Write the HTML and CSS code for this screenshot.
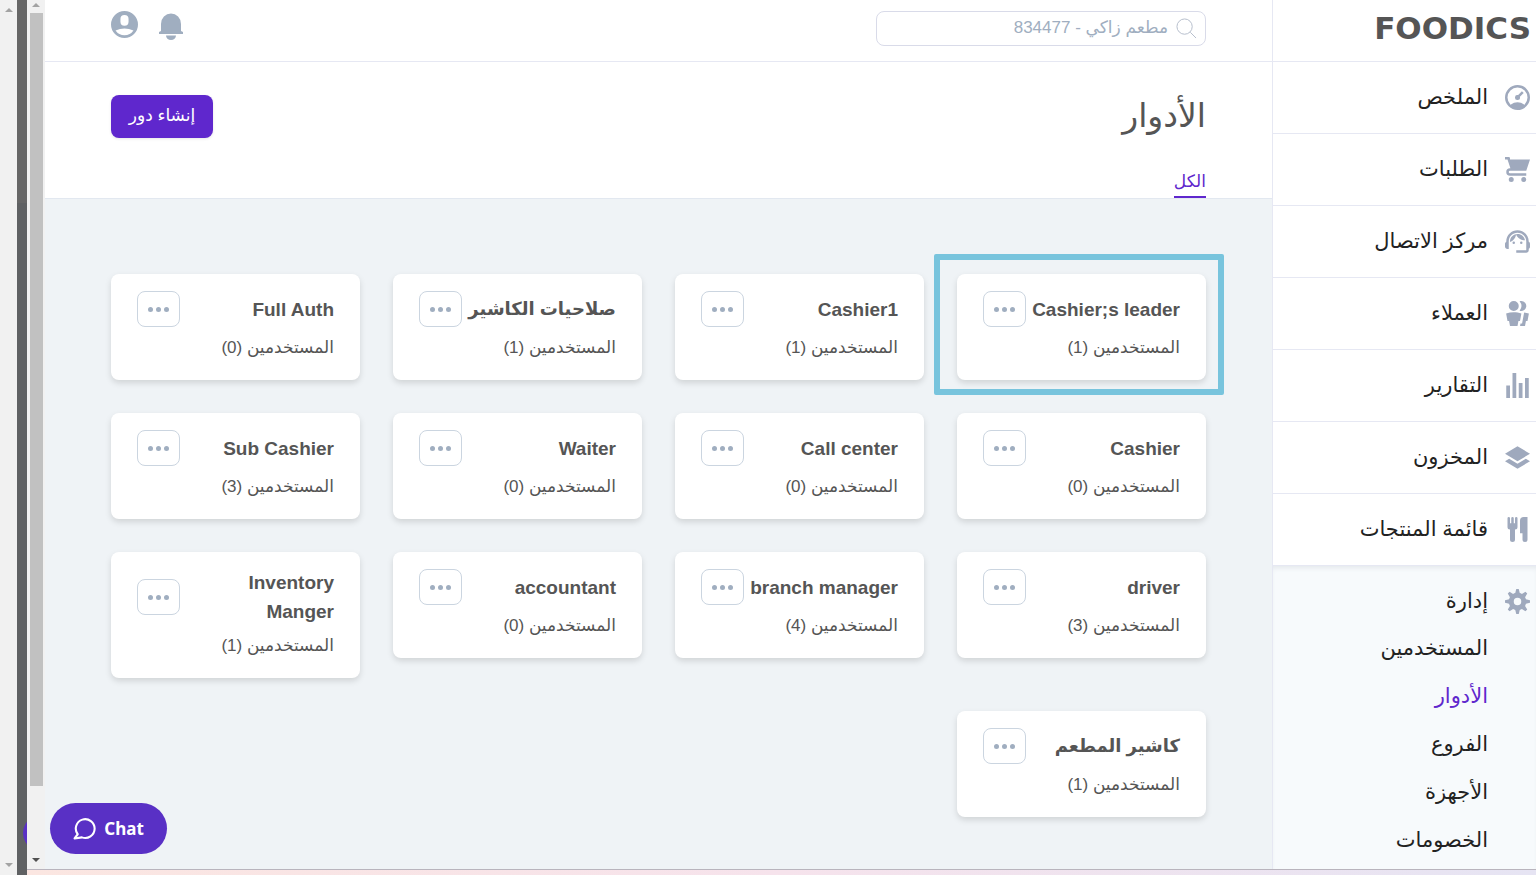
FILE: index.html
```
<!DOCTYPE html>
<html lang="ar" dir="rtl">
<head>
    <meta charset="UTF-8">
    <meta name="viewport" content="width=device-width, initial-scale=1.0">
    <title>Foodics - الأدوار</title>
    <link rel="stylesheet" href="styles.css">
</head>
<body>
    <div class="window">
        <div class="app">
            <!-- Sidebar -->
            <aside class="sidebar">
                <div class="logo" dir="ltr">FOODICS</div>
                <nav>
                    <ul class="menu">
                        <li><a href="#"><svg class="icon" viewBox="0 0 20 20"><path d="M10 20a10 10 0 1 1 0-20 10 10 0 0 1 0 20zm-5.6-4.29a9.95 9.95 0 0 1 11.2 0 8 8 0 1 0-11.2 0zm6.12-7.64l3.02-3.02 1.41 1.41-3.02 3.02a2 2 0 1 1-1.41-1.41z"/></svg><span>الملخص</span></a></li>
                        <li><a href="#"><svg class="icon" viewBox="0 0 20 20"><path d="M4 2h16l-3 9H4a1 1 0 1 0 0 2h13v2H4a3 3 0 0 1 0-6h.33L3 5 2 2H0V0h3a1 1 0 0 1 1 1v1zm1 18a2 2 0 1 1 0-4 2 2 0 0 1 0 4zm10 0a2 2 0 1 1 0-4 2 2 0 0 1 0 4z"/></svg><span>الطلبات</span></a></li>
                        <li><a href="#"><svg class="icon" viewBox="2 2 20 20"><path d="M21 12.22C21 6.73 16.74 3 12 3c-4.69 0-9 3.65-9 9.28-.6.34-1 .98-1 1.72v2c0 1.1.9 2 2 2h1v-6.1c0-3.87 3.13-7 7-7s7 3.13 7 7V19h-8v2h8c1.1 0 2-.9 2-2v-1.22c.59-.31 1-.92 1-1.64v-2.3c0-.7-.41-1.31-1-1.62z"/><circle cx="9" cy="13" r="1"/><circle cx="15" cy="13" r="1"/><path d="M18 11.03C17.52 8.18 15.04 6 12.05 6c-3.03 0-6.29 2.51-6.03 6.45 2.47-1.01 4.33-3.21 4.86-5.89 1.31 2.63 4 4.44 7.12 4.47z"/></svg><span>مركز الاتصال</span></a></li>
                        <li><a href="#"><svg class="icon" viewBox="0 0 20 20"><path d="M7 8a4 4 0 1 1 0-8 4 4 0 0 1 0 8zm0 1c2.15 0 4.2.4 6.1 1.09L12 16h-1.25L10 20H4l-.75-4H2L.9 10.09A17.93 17.93 0 0 1 7 9zm8.31.17c1.32.18 2.59.48 3.8.92L18 16h-1.25L16 20h-3.96l.37-2h1.25l1.65-8.83zM13 0a4 4 0 1 1-1.33 7.76 5.96 5.96 0 0 0 0-7.52C12.1.1 12.53 0 13 0z"/></svg><span>العملاء</span></a></li>
                        <li><a href="#"><svg class="icon" viewBox="0 0 20 20"><path d="M1 10h3v10H1V10zM6 0h3v20H6V0zm5 8h3v12h-3V8zm5-4h3v16h-3V4z"/></svg><span>التقارير</span></a></li>
                        <li><a href="#"><svg class="icon" viewBox="0 0 20 20"><path d="M10 1l10 6-10 6L0 7l10-6zm6.67 10L20 13l-10 6-10-6 3.33-2L10 15l6.67-4z"/></svg><span>المخزون</span></a></li>
                        <li><a href="#"><svg class="icon" viewBox="0 0 20 20"><path d="M18 11v7a2 2 0 0 1-4 0v-5h-2V3a3 3 0 0 1 3-3h3v11zM4 10a2 2 0 0 1-2-2V1a1 1 0 0 1 2 0v4h1V1a1 1 0 0 1 2 0v4h1V1a1 1 0 0 1 2 0v7a2 2 0 0 1-2 2v8a2 2 0 0 1-4 0v-8z"/></svg><span>قائمة المنتجات</span></a></li>
                        <li class="open">
                            <a href="#"><svg class="icon" viewBox="0 0 20 20"><path d="M3.94 6.5L2.22 3.64l1.42-1.42L6.5 3.94c.52-.3 1.1-.54 1.7-.7L9 0h2l.8 3.24c.6.16 1.18.4 1.7.7l2.86-1.72 1.42 1.42-1.72 2.86c.3.52.54 1.1.7 1.7L20 9v2l-3.24.8c-.16.6-.4 1.18-.7 1.7l1.72 2.86-1.42 1.42-2.86-1.72c-.52.3-1.1.54-1.7.7L11 20H9l-.8-3.24c-.6-.16-1.18-.4-1.7-.7l-2.86 1.72-1.42-1.42 1.72-2.86c-.3-.52-.54-1.1-.7-1.7L0 11V9l3.24-.8c.16-.6.4-1.18.7-1.7zM10 13a3 3 0 1 0 0-6 3 3 0 0 0 0 6z"/></svg><span>إدارة</span></a>
                            <ul class="submenu">
                                <li><a href="#">المستخدمين</a></li>
                                <li><a href="#" class="active">الأدوار</a></li>
                                <li><a href="#">الفروع</a></li>
                                <li><a href="#">الأجهزة</a></li>
                                <li><a href="#">الخصومات</a></li>
                            </ul>
                        </li>
                    </ul>
                </nav>
            </aside>

            <!-- Main content -->
            <main class="main">
                <header class="topbar">
                    <div class="search">
                        <svg viewBox="0 0 22 22"><circle cx="9" cy="9" r="8"/><path d="M15 15l6 6"/></svg>
                        <input type="text" placeholder="مطعم زاكي - 834477" aria-label="بحث">
                    </div>
                    <div class="top-actions">
                        <button class="icon-btn" aria-label="الإشعارات"><svg class="bell" viewBox="0 0 24 27"><path d="M2 18V11a10 10.500 0 0 1 20 0v7l2 1v2H0v-2l2-1z"/><path d="M7 22.500h10a5 4.500 0 0 1-10 0z"/></svg></button>
                        <button class="icon-btn" aria-label="الحساب"><svg class="user" viewBox="0 0 20 20"><path d="M10 20a10 10 0 1 1 0-20 10 10 0 0 1 0 20zM7 6v2a3 3 0 1 0 6 0V6a3 3 0 1 0-6 0zm-3.65 8.44a8 8 0 0 0 13.3 0 15.94 15.94 0 0 0-13.3 0z"/></svg></button>
                    </div>
                </header>

                <section class="page-head">
                    <div class="title-row">
                        <h1>الأدوار</h1>
                        <button class="create-btn">إنشاء دور</button>
                    </div>
                    <div class="tabs"><a href="#" class="tab">الكل</a></div>
                </section>

                <section class="cards">
                    <article class="card highlighted">
                        <div class="card-head"><h2>Cashier;s leader</h2><button class="more" aria-label="خيارات"><i></i><i></i><i></i></button></div>
                        <p>المستخدمين (1)</p>
                    </article>
                    <article class="card">
                        <div class="card-head"><h2>Cashier1</h2><button class="more" aria-label="خيارات"><i></i><i></i><i></i></button></div>
                        <p>المستخدمين (1)</p>
                    </article>
                    <article class="card">
                        <div class="card-head"><h2 class="ar">صلاحيات الكاشير</h2><button class="more" aria-label="خيارات"><i></i><i></i><i></i></button></div>
                        <p>المستخدمين (1)</p>
                    </article>
                    <article class="card">
                        <div class="card-head"><h2>Full Auth</h2><button class="more" aria-label="خيارات"><i></i><i></i><i></i></button></div>
                        <p>المستخدمين (0)</p>
                    </article>
                    <article class="card">
                        <div class="card-head"><h2>Cashier</h2><button class="more" aria-label="خيارات"><i></i><i></i><i></i></button></div>
                        <p>المستخدمين (0)</p>
                    </article>
                    <article class="card">
                        <div class="card-head"><h2>Call center</h2><button class="more" aria-label="خيارات"><i></i><i></i><i></i></button></div>
                        <p>المستخدمين (0)</p>
                    </article>
                    <article class="card">
                        <div class="card-head"><h2>Waiter</h2><button class="more" aria-label="خيارات"><i></i><i></i><i></i></button></div>
                        <p>المستخدمين (0)</p>
                    </article>
                    <article class="card">
                        <div class="card-head"><h2>Sub Cashier</h2><button class="more" aria-label="خيارات"><i></i><i></i><i></i></button></div>
                        <p>المستخدمين (3)</p>
                    </article>
                    <article class="card">
                        <div class="card-head"><h2>driver</h2><button class="more" aria-label="خيارات"><i></i><i></i><i></i></button></div>
                        <p>المستخدمين (3)</p>
                    </article>
                    <article class="card">
                        <div class="card-head"><h2>branch manager</h2><button class="more" aria-label="خيارات"><i></i><i></i><i></i></button></div>
                        <p>المستخدمين (4)</p>
                    </article>
                    <article class="card">
                        <div class="card-head"><h2>accountant</h2><button class="more" aria-label="خيارات"><i></i><i></i><i></i></button></div>
                        <p>المستخدمين (0)</p>
                    </article>
                    <article class="card">
                        <div class="card-head"><h2>Inventory Manger</h2><button class="more" aria-label="خيارات"><i></i><i></i><i></i></button></div>
                        <p>المستخدمين (1)</p>
                    </article>
                    <article class="card">
                        <div class="card-head"><h2 class="ar">كاشير المطعم</h2><button class="more" aria-label="خيارات"><i></i><i></i><i></i></button></div>
                        <p>المستخدمين (1)</p>
                    </article>
                </section>

                <button class="chat" dir="ltr">
                    <svg viewBox="0 0 22 22"><path d="M4.500 16.500A9 9 0 1 1 8.500 19.500L1.500 20.500z"/></svg>
                    Chat
                </button>
            </main>

            <div class="scrollbar inner">
                <span class="arrow up"></span>
                <span class="thumb"></span>
                <span class="arrow down"></span>
            </div>
        </div>
        <div class="bottom-strip"></div>
    </div>

    <!-- Page behind the window -->
    <div class="backdrop"><span class="chat-edge"></span></div>
    <div class="scrollbar outer">
        <span class="arrow up"></span>
        <span class="arrow down"></span>
    </div>
</body>
</html>
```
FILE: styles.css
```
* {
    box-sizing: border-box;
}

body {
    margin: 0;
    height: 100vh;
    display: flex;
    overflow: hidden;
    font-family: "Liberation Sans", "DejaVu Sans", sans-serif;
    color: #555;
    background-color: #fff;
}

h1, h2, p, ul {
    margin: 0;
    padding: 0;
}

ul {
    list-style: none;
}

a {
    color: inherit;
    text-decoration: none;
}

button {
    font-family: inherit;
    cursor: pointer;
}

.window {
    flex: 1;
    min-width: 0;
    display: flex;
    flex-direction: column;
}

.app {
    flex: 1;
    min-height: 0;
    display: flex;
}

/* Sidebar */
.sidebar {
    flex: 0 0 264px;
    overflow: hidden;
    border-left: 1px solid #e6e8f3;
    background-color: #fff;
}

.logo {
    height: 62px;
    padding: 0 5px;
    line-height: 56px;
    text-align: right;
    font-family: "DejaVu Sans", sans-serif;
    font-weight: bold;
    font-size: 31px;
    border-bottom: 1px solid #e6e8f3;
}

.menu > li {
    border-bottom: 1px solid #e6e8f3;
}

.menu > li > a {
    display: flex;
    align-items: center;
    gap: 17px;
    height: 71px;
    padding: 0 6px;
    font-size: 21px;
    color: #222;
}

.menu span {
    padding-bottom: 2px;
}

.icon {
    width: 25px;
    height: 25px;
    fill: #9fa9bd;
}

.menu > .open {
    background-color: #f7fafc;
    box-shadow: inset 0 4px 5px -2px #e4e8ec;
    border-bottom: none;
}

.submenu {
    margin-top: -12px;
    padding-bottom: 12px;
}

.submenu a {
    display: block;
    height: 48px;
    line-height: 46px;
    padding-right: 48px;
    font-size: 21px;
    color: #222;
}

.submenu .active {
    color: #5f27cd;
}

/* Main */
.main {
    flex: 1;
    min-width: 0;
    position: relative;
    background-color: #eff3f6;
}

.topbar {
    display: flex;
    justify-content: space-between;
    align-items: flex-start;
    height: 62px;
    padding: 11px 66px 0;
    background-color: #fff;
    border-bottom: 1px solid #e6e8f3;
}

.search {
    display: flex;
    align-items: center;
    gap: 8px;
    width: 330px;
    height: 35px;
    padding: 0 8px;
    border: 1px solid #d9dbe9;
    border-radius: 8px;
}

.search svg {
    width: 21px;
    height: 21px;
    fill: none;
    stroke: #b3bccb;
    stroke-width: 1;
}

.search input {
    flex: 1;
    min-width: 0;
    padding: 0 0 2px;
    border: none;
    outline: none;
    background: none;
    font-family: inherit;
    font-size: 17px;
}

.search input::placeholder {
    color: #a0aec0;
}

.top-actions {
    display: flex;
    align-items: flex-start;
    gap: 21px;
}

.icon-btn {
    display: flex;
    padding: 0;
    border: none;
    background: none;
}

.icon-btn svg {
    fill: #a0aec0;
}

.bell {
    width: 24px;
    height: 27px;
    margin-top: 2px;
}

.user {
    width: 27px;
    height: 27px;
}

.page-head {
    padding: 33px 66px 0;
    background-color: #fff;
    border-bottom: 1px solid #e2e8f0;
}

.title-row {
    display: flex;
    justify-content: space-between;
    align-items: center;
    height: 43px;
}

h1 {
    padding-bottom: 2px;
    font-size: 33px;
    font-weight: normal;
}

.create-btn {
    height: 43px;
    width: 102px;
    padding: 0 0 2px;
    border: none;
    border-radius: 8px;
    background-color: #5f27cd;
    box-shadow: 0 1px 3px rgba(0, 0, 0, 0.1);
    color: #fff;
    font-size: 17px;
}

.tabs {
    display: flex;
    margin-top: 30px;
}

.tab {
    height: 30px;
    line-height: 28px;
    border-bottom: 2px solid #5f27cd;
    color: #5f27cd;
    font-size: 17px;
}

.cards {
    display: grid;
    grid-template-columns: repeat(4, 1fr);
    align-items: start;
    gap: 33px;
    padding: 75px 66px 0;
}

.card {
    padding: 16px 26px 20px;
    border-radius: 8px;
    background-color: #fff;
    box-shadow: 0 3px 6px rgba(0, 0, 0, 0.13);
}

/* Square frame drawn around the selected role */
.highlighted {
    position: relative;
}

.highlighted::after {
    content: "";
    position: absolute;
    inset: -20px -18px -15px -23px;
    border: 6px solid #78c4dd;
    border-radius: 2px;
    pointer-events: none;
}

.card-head {
    display: flex;
    justify-content: space-between;
    align-items: center;
    gap: 6px;
    min-height: 38px;
}

h2 {
    font-size: 19px;
    line-height: 29px;
}

h2.ar {
    font-size: 18px;
    white-space: nowrap;
}

.card p {
    margin-top: 8px;
    font-size: 17px;
    line-height: 24px;
}

.more {
    flex: 0 0 43px;
    display: flex;
    justify-content: center;
    align-items: center;
    gap: 3px;
    height: 36px;
    padding: 0;
    border: 1px solid #cbd5e0;
    border-radius: 8px;
    background-color: #fff;
}

.more i {
    width: 5px;
    height: 5px;
    border-radius: 50%;
    background-color: #a0aec0;
}

/* Chat button floats over the page */
.chat {
    position: absolute;
    left: 5px;
    bottom: 15px;
    display: flex;
    align-items: center;
    justify-content: center;
    gap: 8px;
    width: 117px;
    height: 51px;
    border: none;
    border-radius: 26px;
    background-color: #5930c5;
    color: #fff;
    font-family: "Noto Sans", sans-serif;
    font-weight: bold;
    font-size: 17px;
}

.chat svg {
    width: 23px;
    height: 23px;
    fill: none;
    stroke: #fff;
    stroke-width: 2;
    stroke-linejoin: round;
}

/* Scroll bars */
.scrollbar {
    display: flex;
    flex-direction: column;
    align-items: center;
    background-color: #f1f1f1;
}

.inner {
    width: 18px;
    padding: 3px 0 7px;
}

.outer {
    width: 17px;
    padding: 8px 0;
}

.thumb {
    width: 13px;
    height: 90%;
    margin-top: 6px;
    background-color: #c1c1c1;
}

.arrow {
    border: 4px solid transparent;
}

.up {
    border-top: none;
    border-bottom-color: #a3a3a3;
}

.down {
    margin-top: auto;
    border-bottom: none;
    border-top-color: #505050;
}

.outer .down {
    border-top-color: #a3a3a3;
}

.backdrop {
    width: 10px;
    position: relative;
    overflow: hidden;
    background: linear-gradient(#666 203px, #5f6163 203px);
}

.chat-edge {
    position: absolute;
    left: 6px;
    bottom: 21px;
    width: 51px;
    height: 42px;
    border-radius: 50%;
    background-color: #5930c5;
}

.bottom-strip {
    height: 6px;
    border-top: 1px solid #b9b4bd;
    background: linear-gradient(to left, #e6e4f3, #f6e3ec 50%, #fbe6e1);
}
```
